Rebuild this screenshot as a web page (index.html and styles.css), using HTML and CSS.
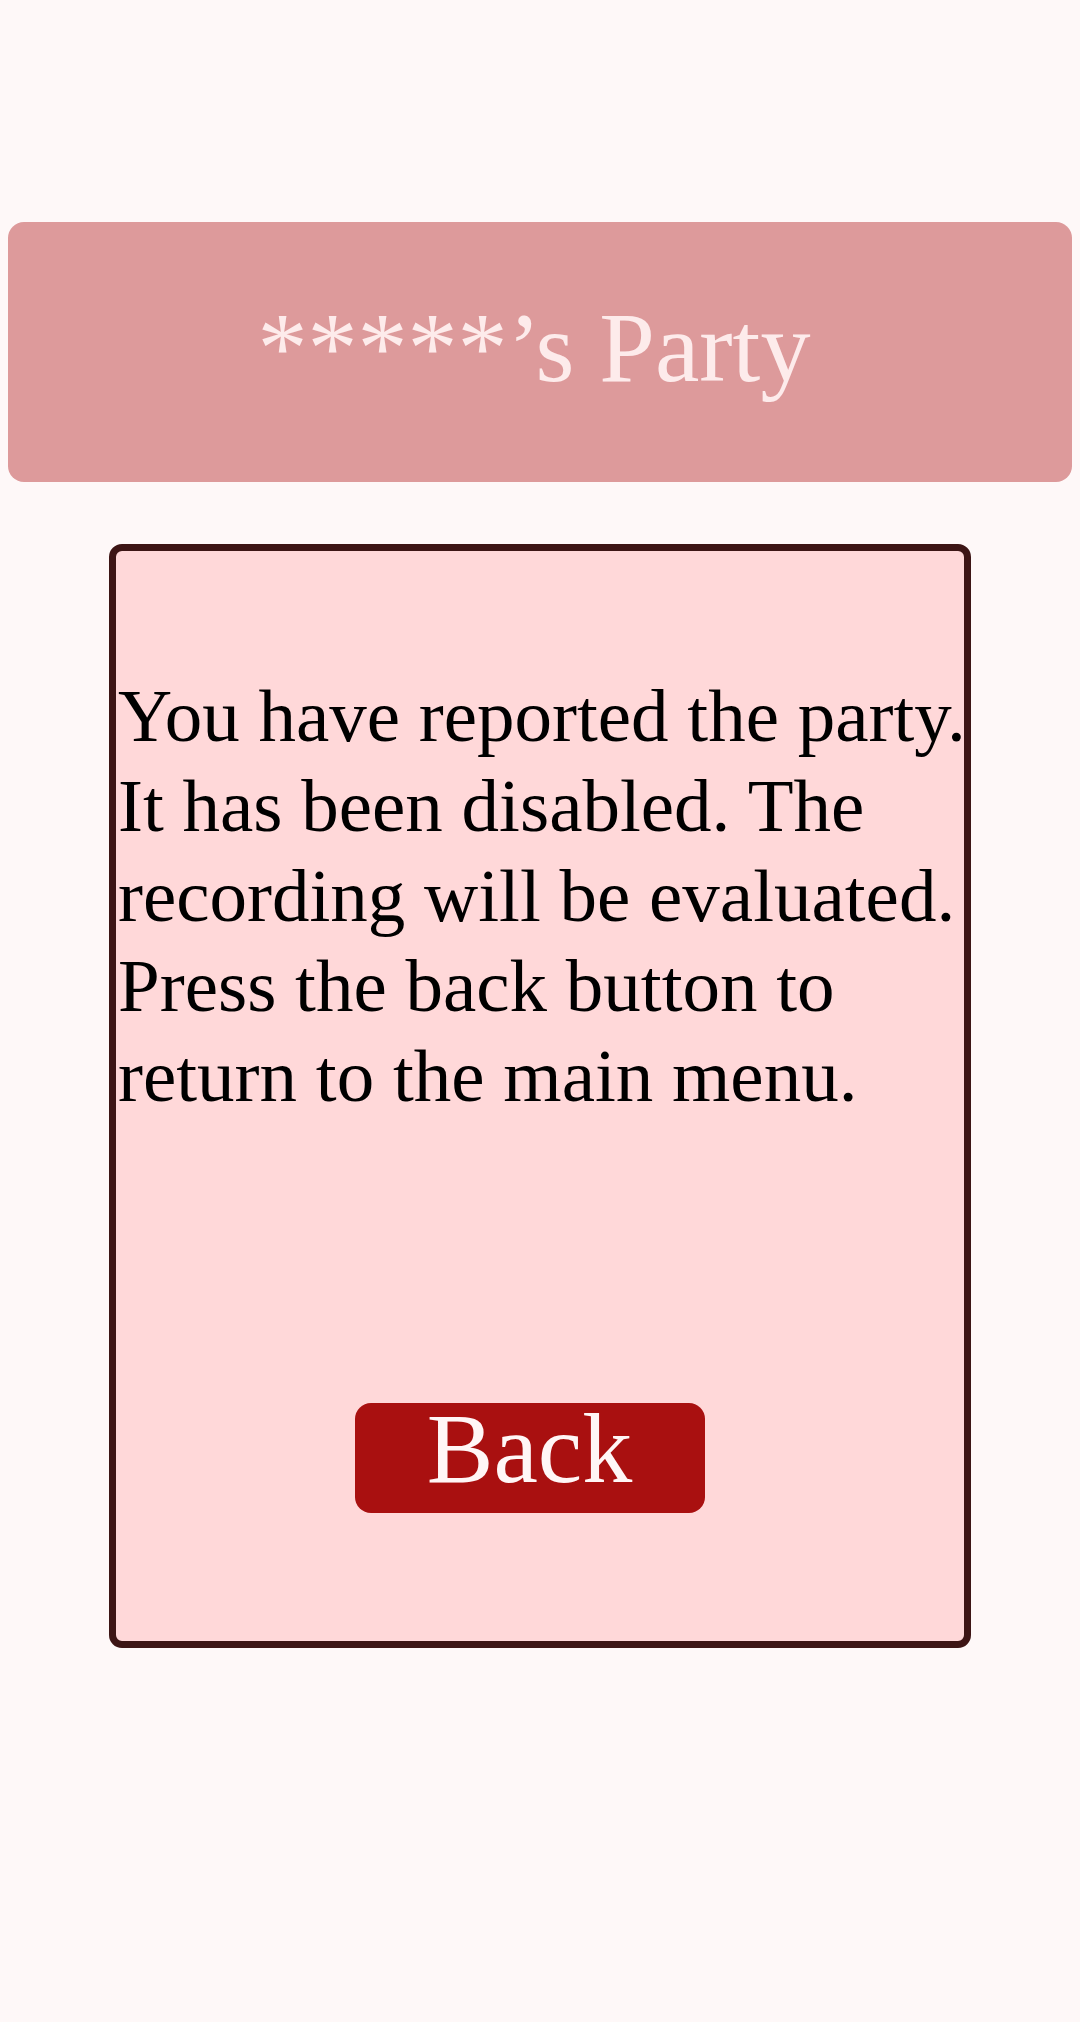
FILE: index.html
```html
<!DOCTYPE html>
<html lang="en">
<head>
<meta charset="utf-8">
<title>Party Reported</title>
<link rel="stylesheet" href="styles.css">
</head>
<body>
  <main class="screen">
    <header class="party-header">
      <h1 class="party-title">*****’s Party</h1>
    </header>
    <section class="report-card">
      <p class="report-message">You have reported the party. It has been disabled. The recording will be evaluated. Press the back button to return to the main menu.</p>
      <button class="back-button" type="button">Back</button>
    </section>
  </main>
</body>
</html>
```

FILE: styles.css
```css
html, body {
  margin: 0;
  padding: 0;
}

body {
  background: #fef8f8;
  font-family: "Liberation Serif", "Times New Roman", serif;
  min-height: 2022px;
}

.screen {
  padding: 222px 8px 0 8px;
  display: flex;
  flex-direction: column;
  align-items: center;
}

.party-header {
  width: 100%;
  height: 260px;
  box-sizing: border-box;
  background: #dd9a9b;
  border-radius: 16px;
  display: flex;
  align-items: center;
  justify-content: center;
  padding-right: 12px;
}

.party-title {
  margin: 0;
  font-weight: normal;
  font-size: 100px;
  line-height: 1;
  color: #fdebeb;
  position: relative;
  top: -4px;
}

.report-card {
  margin-top: 62px;
  width: 862px;
  height: 1104px;
  box-sizing: border-box;
  border: 7px solid #3d1515;
  border-radius: 13px;
  background: #ffd8d9;
  padding: 120px 0 0 2px;
  display: flex;
  flex-direction: column;
}

.report-message {
  margin: 0 -12px 0 0;
  font-size: 75px;
  line-height: 90px;
  color: #000;
}

.back-button {
  align-self: center;
  margin: 282px 23px 0 0;
  width: 350px;
  height: 110px;
  box-sizing: border-box;
  padding: 0 0 18px 0;
  border: none;
  border-radius: 16px;
  background: #a91010;
  color: #fff6f6;
  font-family: "Liberation Serif", "Times New Roman", serif;
  font-size: 100px;
  line-height: 92px;
}
```
